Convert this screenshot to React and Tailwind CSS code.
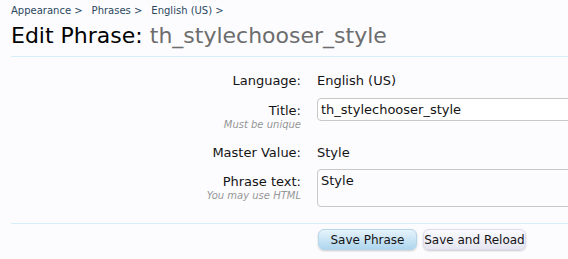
const FONT = { fontFamily: '"Trebuchet MS", "DejaVu Sans", sans-serif' };

function Row({ label, hint, children, className = '' }) {
  return (
    <div className={`flex ${className}`}>
      <div className="w-[291px] shrink-0 pr-[1px] text-right">
        <div className="text-[13px] leading-[16px] text-[#141414]">{label}</div>
        {hint && <div className="text-[10px] italic leading-[12px] text-[#969696]">{hint}</div>}
      </div>
      <div className="ml-[15px] flex-1">{children}</div>
    </div>
  );
}

export default function App() {
  return (
    <div className="h-[259px] w-[568px] overflow-hidden bg-[#fcfcff] pl-[11px]" style={FONT}>
      <nav className="flex gap-[9px] pt-[4px] text-[10px] leading-[14px] text-[#2b485c]">
        <span>Appearance &gt;</span>
        <span>Phrases &gt;</span>
        <span>English (US) &gt;</span>
      </nav>
      <h1 className="mt-[5px] whitespace-nowrap text-[22px] leading-[26px] text-black">
        Edit Phrase: <span className="text-[#6d6d6d]">th_stylechooser_style</span>
      </h1>
      <div className="mt-[7px] h-px bg-[#d7edfc]" />

      <div className="pt-[16px]">
        <Row label="Language:">
          <div className="text-[13px] leading-[16px] text-[#141414]">English (US)</div>
        </Row>
        <Row label="Title:" hint="Must be unique" className="mt-[14px]">
          <div className="-mt-[5px] flex h-[23px] w-[300px] items-center rounded-[4px] border border-[#c8c8c8] bg-white px-[3px] text-[13px] text-[#141414]">
            th_stylechooser_style
          </div>
        </Row>
        <Row label="Master Value:" className="mt-[14px]">
          <div className="text-[13px] leading-[16px] text-[#141414]">Style</div>
        </Row>
        <Row label="Phrase text:" hint="You may use HTML" className="mt-[13px]">
          <div className="-mt-[5px] h-[38px] w-[300px] rounded-[4px] border border-[#c8c8c8] bg-[#fcfcff] px-[3px] pt-[3px] text-[13px] leading-[16px] text-[#141414]">
            Style
          </div>
        </Row>
      </div>

      <div className="mt-[16px] h-px bg-[#d7edfc]" />

      <div className="mt-[5px] flex gap-[6px] pl-[307px]">
        <button className="h-[21px] w-[99px] rounded-[6px] border border-[#b6d6ea] bg-gradient-to-b from-[#e6f3fb] to-[#aed6ee] text-[12px] text-[#141414] shadow-[0_1px_2px_rgba(0,0,0,0.2)]">
          Save Phrase
        </button>
        <button className="h-[21px] w-[103px] rounded-[6px] border border-[#dcdcec] bg-gradient-to-b from-[#fafaff] to-[#e6e6f2] text-[12px] text-[#141414] shadow-[0_1px_2px_rgba(0,0,0,0.2)]">
          Save and Reload
        </button>
      </div>
    </div>
  );
}
